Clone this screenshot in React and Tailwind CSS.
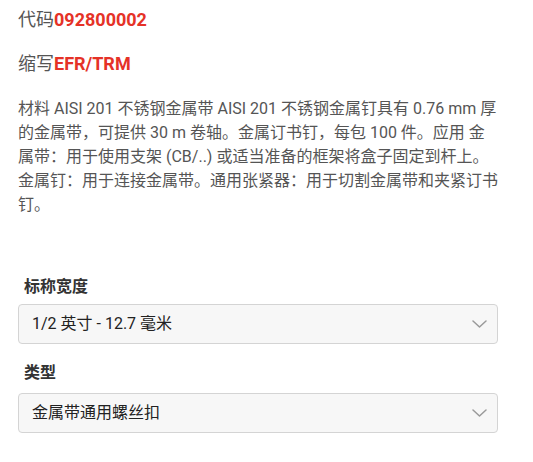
import React from 'react';

const font = { fontFamily: 'Roboto, "Noto Sans CJK SC", sans-serif' };

const Chevron = () => (
  <svg width="15" height="8" viewBox="0 0 15 8" fill="none" className="shrink-0">
    <path d="M1 1l6.5 6 6.5-6" stroke="#9a9a9a" strokeWidth="1.5" strokeLinecap="round" strokeLinejoin="round" />
  </svg>
);

const SelectBox = ({ label, value, gap }) => (
  <div>
    <div className={`px-[6px] text-[16px] leading-6 font-bold text-[#333] ${gap}`}>{label}</div>
    <div className="h-[40px] flex items-center justify-between pl-[13px] pr-[10px] bg-[#f7f7f7] border border-[#d4d4d4] rounded-[4px] text-[16px] text-[#222]">
      <span>{value}</span>
      <Chevron />
    </div>
  </div>
);

export default function App() {
  return (
    <div className="w-[533px] h-[462px] bg-white px-[18px] pt-[8px]" style={font}>
      <div className="w-[480px]">
        <p className="text-[18px] leading-6 text-[#555]">
          代码<span className="font-bold text-[#e53227]">092800002</span>
        </p>
        <p className="mt-[20px] text-[18px] leading-6 text-[#555]">
          缩写<span className="font-bold text-[#e53227]">EFR/TRM</span>
        </p>
        <p className="mt-[21px] text-[16px] leading-6 text-[#555]">
          材料 AISI 201 不锈钢金属带 AISI 201 不锈钢金属钉具有 0.76 mm 厚的金属带，可提供 30 m 卷轴。金属订书钉，每包 100 件。应用 金属带：用于使用支架 (CB/..) 或适当准备的框架将盒子固定到杆上。金属钉：用于连接金属带。通用张紧器：用于切割金属带和夹紧订书钉。
        </p>
        <div className="mt-[58px] flex flex-col gap-[17px]">
          <SelectBox label="标称宽度" value="1/2 英寸 - 12.7 毫米" gap="mb-[5px]" />
          <SelectBox label="类型" value="金属带通用螺丝扣" gap="mb-[8px]" />
        </div>
      </div>
    </div>
  );
}
